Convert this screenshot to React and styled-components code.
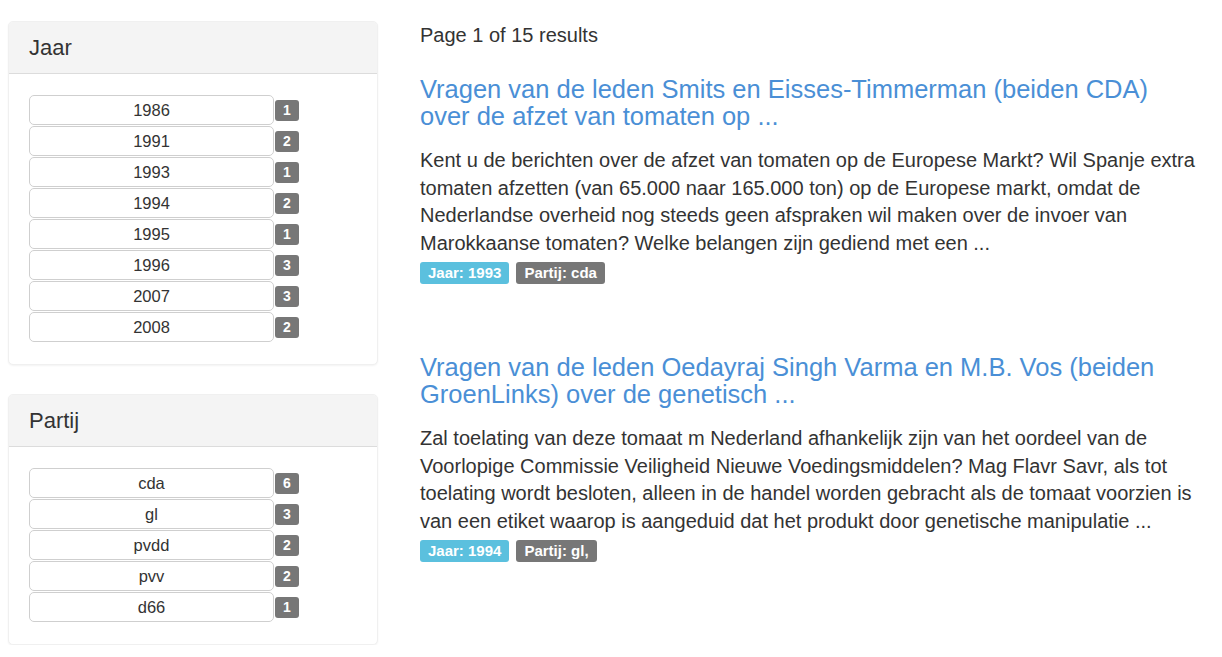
import React from "react";
import styled, { createGlobalStyle } from "styled-components";

const Global = createGlobalStyle`
  html, body { margin: 0; padding: 0; background: #fff; }
  body {
    font-family: "Liberation Sans", Arial, Helvetica, sans-serif;
    color: #333;
  }
`;

const Page = styled.div`
  display: grid;
  grid-template-columns: 370px 790px;
  column-gap: 42px;
  padding: 21px 8px 0 8px;
  align-items: start;
`;

const Sidebar = styled.aside`
  display: flex;
  flex-direction: column;
  gap: 29px;
`;

const Panel = styled.section`
  background: #fff;
  border: 1px solid #f0f0f0;
  border-radius: 5px;
  box-shadow: 0 1px 2px rgba(0, 0, 0, 0.05);
  overflow: hidden;
`;

const PanelHeading = styled.div`
  background: #f4f4f4;
  border-bottom: 1px solid #dcdcdc;
  padding: 13px 20px 13px 20px;
  font-size: 22px;
  line-height: 25px;
  color: #333;
`;

const PanelBody = styled.div`
  padding: 21px 20px 22px 20px;
  display: flex;
  flex-direction: column;
  gap: 1px;
`;

const FacetRow = styled.div`
  display: flex;
  align-items: center;
  gap: 1px;
`;

const FacetButton = styled.button`
  width: 245px;
  height: 30px;
  background: #fff;
  border: 1px solid #cfcfcf;
  border-radius: 5px;
  font-family: inherit;
  font-size: 16.5px;
  color: #333;
  padding: 0;
  cursor: pointer;
`;

const Badge = styled.span`
  display: inline-block;
  min-width: 24px;
  height: 21px;
  line-height: 21px;
  box-sizing: border-box;
  text-align: center;
  background: #777;
  color: #fff;
  font-weight: bold;
  font-size: 14px;
  border-radius: 3px;
`;

const Results = styled.main`
  display: flex;
  flex-direction: column;
`;

const Summary = styled.div`
  font-size: 20px;
  line-height: 28px;
  margin-bottom: 27px;
`;

const Result = styled.article`
  margin-bottom: 70px;
`;

const Title = styled.a`
  display: block;
  max-width: 772px;
  color: #4a8fd6;
  font-size: 25.5px;
  line-height: 27px;
  text-decoration: none;
  margin-bottom: 17px;
`;

const Snippet = styled.p`
  margin: 0 0 4px 0;
  font-size: 20px;
  line-height: 27.7px;
`;

const Labels = styled.div`
  display: flex;
  gap: 7px;
`;

const Label = styled.span`
  display: inline-block;
  background: ${(p) => (p.$tone === "info" ? "#5bc0de" : "#777")};
  color: #fff;
  font-weight: bold;
  font-size: 15px;
  line-height: 22px;
  padding: 0 8px;
  border-radius: 3px;
`;

const years = [
  ["1986", 1],
  ["1991", 2],
  ["1993", 1],
  ["1994", 2],
  ["1995", 1],
  ["1996", 3],
  ["2007", 3],
  ["2008", 2],
];

const parties = [
  ["cda", 6],
  ["gl", 3],
  ["pvdd", 2],
  ["pvv", 2],
  ["d66", 1],
];

const results = [
  {
    title:
      "Vragen van de leden Smits en Eisses-Timmerman (beiden CDA) over de afzet van tomaten op ...",
    text:
      "Kent u de berichten over de afzet van tomaten op de Europese Markt? Wil Spanje extra tomaten afzetten (van 65.000 naar 165.000 ton) op de Europese markt, omdat de Nederlandse overheid nog steeds geen afspraken wil maken over de invoer van Marokkaanse tomaten? Welke belangen zijn gediend met een ...",
    year: "1993",
    party: "cda",
  },
  {
    title:
      "Vragen van de leden Oedayraj Singh Varma en M.B. Vos (beiden GroenLinks) over de genetisch ...",
    text:
      "Zal toelating van deze tomaat m Nederland afhankelijk zijn van het oordeel van de Voorlopige Commissie Veiligheid Nieuwe Voedingsmiddelen? Mag Flavr Savr, als tot toelating wordt besloten, alleen in de handel worden gebracht als de tomaat voorzien is van een etiket waarop is aangeduid dat het produkt door genetische manipulatie ...",
    year: "1994",
    party: "gl,",
  },
];

function Facet({ title, items }) {
  return (
    <Panel>
      <PanelHeading>{title}</PanelHeading>
      <PanelBody>
        {items.map(([name, count]) => (
          <FacetRow key={name}>
            <FacetButton>{name}</FacetButton>
            <Badge>{count}</Badge>
          </FacetRow>
        ))}
      </PanelBody>
    </Panel>
  );
}

export default function App() {
  return (
    <>
      <Global />
      <Page>
        <Sidebar>
          <Facet title="Jaar" items={years} />
          <Facet title="Partij" items={parties} />
        </Sidebar>
        <Results>
          <Summary>Page 1 of 15 results</Summary>
          {results.map((r) => (
            <Result key={r.title}>
              <Title href="#">{r.title}</Title>
              <Snippet>{r.text}</Snippet>
              <Labels>
                <Label $tone="info">Jaar: {r.year}</Label>
                <Label>Partij: {r.party}</Label>
              </Labels>
            </Result>
          ))}
        </Results>
      </Page>
    </>
  );
}
